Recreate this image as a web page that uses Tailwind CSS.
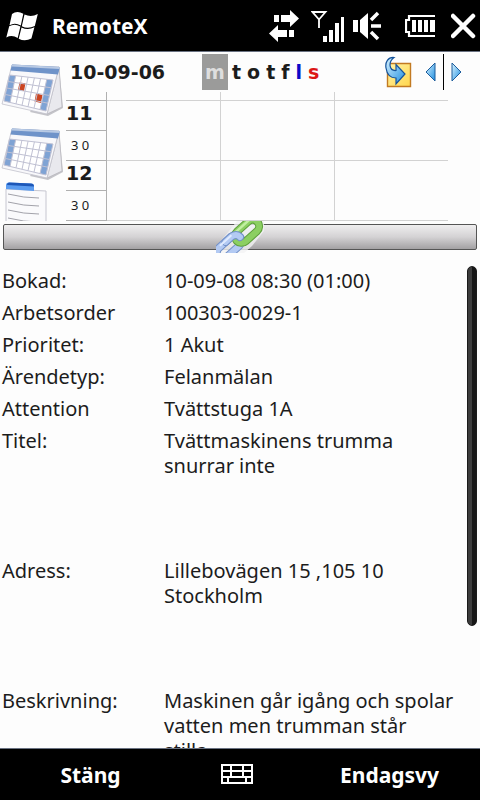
<!DOCTYPE html>
<html lang="sv">
<head>
    <meta charset="UTF-8" />
    <meta name="viewport" content="width=device-width, initial-scale=1.0"/>
    <title>RemoteX</title>
    <script src="https://cdn.jsdelivr.net/npm/@tailwindcss/browser@4"></script>
    <style>
        body { font-family: 'Noto Sans', 'Open Sans', sans-serif; }
        .wide { font-family: 'DejaVu Sans', sans-serif; }
    </style>
</head>
<body class="bg-[#fdfdfd] text-[#1c1c1c] h-screen flex flex-col overflow-hidden">

<!-- Status bar -->
<header class="h-[52px] shrink-0 bg-black text-white border-b border-gray-500 flex items-center pl-1.5 pr-1">
    <button aria-label="Start">
        <svg class="w-8 h-8" viewBox="6 10 32 32" fill="#fff">
            <path d="M12 14Q17 10 23.300 13.700L20.800 25.500Q15 22 9.500 25.200Z"/>
            <path d="M24.500 14.500Q31 17.500 37.800 14L34.800 26Q28 29.500 21.800 26.300Z"/>
            <path d="M9.200 26.300Q14.500 23.200 20.400 26.500L17.700 38Q12 34.500 6.300 37.500Z"/>
            <path d="M21.500 27.400Q28 30.600 34.400 27.200L31.400 38.500Q25 42 18.700 38.800Z"/>
        </svg>
    </button>
    <h1 class="ml-3.5 text-[21px] leading-7 font-bold">RemoteX</h1>
    <div class="ml-auto flex items-center">
        <svg class="w-[30px] h-9" viewBox="269 8 30 36" fill="#fff">
            <path d="M274 15h5v7h-5zM281 15h9v-5l9 8.500-9 8.500v-5h-9zM289 30h5v7h-5zM287 30h-9v-5l-9 8.500 9 8.500v-5h9z"/>
        </svg>
        <svg class="ml-3 w-[34px] h-9" viewBox="311 8 34 36" fill="#fff">
            <path d="M312.500 12h13L319 19.500ZM319 19v9" fill="none" stroke="#fff" stroke-width="1.800"/>
            <path d="M323 36h4v6h-4zM329 30h4v12h-4zM335 23h4v19h-4zM341 17h3v25h-3z"/>
        </svg>
        <svg class="ml-2 w-7 h-9" viewBox="352 8 28 36" fill="#fff">
            <path d="M352 20h5v12h-5zM359 20l8-7v26l-8-7z"/>
            <path d="M370 26h10M370 20l7-7M370 32l7 7" fill="none" stroke="#fff" stroke-width="3.500"/>
        </svg>
        <svg class="ml-6 w-[31px] h-9" viewBox="405 8 31 36" fill="#fff">
            <path d="M435 16H409V20H406V32H409V36H435" fill="none" stroke="#fff" stroke-width="2.200"/>
            <path d="M412 20h4v12h-4zM418 20h4v12h-4zM424 20h4v12h-4zM430 20h5v12h-5z"/>
        </svg>
        <button class="ml-[15px]" aria-label="Stäng fönster">
            <svg class="w-[25px] h-9" viewBox="451 8 25 36">
                <path d="M453 16l20 20M473 16L453 36" stroke="#fff" stroke-width="4.500" stroke-linecap="round"/>
            </svg>
        </button>
    </div>
</header>

<!-- Calendar -->
<section class="h-[169px] shrink-0 flex">
    <nav class="w-[66px] shrink-0 h-full overflow-hidden flex flex-col pt-2.5">
        <button class="h-16 shrink-0" aria-label="Månad">
            <svg class="w-[66px] h-16" viewBox="0 0 66 64">
                <path d="M59 4L63 46L48 54L30 50Z" fill="#c4c4c9"/>
                <path d="M59 5L62 45L47 52Z" fill="#e9e9ee" stroke="#b0afb6" stroke-width=".6"/>
                <path d="M12 3L59 5L47 52L2 42Z" fill="#f8f8fb" stroke="#c2c2cc" stroke-width=".8"/>
                <path d="M12 2.500L60 5L58 12.500L10.500 8.500Z" fill="#6f93c9"/>
                <path d="M12 2.500L60 5L59.500 7L11.500 4.500Z" fill="#b9cae4"/>
                <path d="M9.500 13L53 18L46 49L4 39Z" fill="#fff"/>
                <path d="M9.500 13L15.700 13.700L10 40.400L4 39Z M46.800 17.300L53 18L46 49L40 47.600Z" fill="#7fa3d4"/>
                <path d="M19.500 20.500L25.500 21.300L24 29L18 28Z M36 31.500L42.500 33L41 41L34.500 39.500Z" fill="#cb4420"/>
                <path d="M9.500 13L53 18L46 49L4 39ZM8 19.500L51.300 25.800M6.800 26L49.500 33.500M5.400 32.500L47.800 41.200M15.700 13.700L10 40.400M21.900 14.400L16 41.900M28.100 15.100L22 43.300M34.400 15.900L28 44.700M40.600 16.600L34 46.100M46.800 17.300L40 47.600" fill="none" stroke="#c0c1d3"/>
            </svg>
        </button>
        <button class="h-14 shrink-0" aria-label="Vecka">
            <svg class="w-[66px] h-14" viewBox="0 0 66 56">
                <path d="M59 4L63 46L48 54L30 50Z" fill="#c4c4c9"/>
                <path d="M59 5L62 45L47 52Z" fill="#e9e9ee" stroke="#b0afb6" stroke-width=".6"/>
                <path d="M12 3L59 5L47 52L2 42Z" fill="#f8f8fb" stroke="#c2c2cc" stroke-width=".8"/>
                <path d="M12 2.500L60 5L58 12.500L10.500 8.500Z" fill="#6f93c9"/>
                <path d="M12 2.500L60 5L59.500 7L11.500 4.500Z" fill="#b9cae4"/>
                <path d="M9.500 13L53 18L46 49L4 39Z" fill="#fff"/>
                <path d="M9.500 13L15.700 13.700L10 40.400L4 39Z M46.800 17.300L53 18L46 49L40 47.600Z" fill="#7fa3d4"/>
                <path d="M9.500 13L53 18L46 49L4 39ZM8 19.500L51.300 25.800M6.800 26L49.500 33.500M5.400 32.500L47.800 41.200M15.700 13.700L10 40.400M21.900 14.400L16 41.900M28.100 15.100L22 43.300M34.400 15.900L28 44.700M40.600 16.600L34 46.100M46.800 17.300L40 47.600" fill="none" stroke="#c0c1d3"/>
            </svg>
        </button>
        <button class="h-12 shrink-0" aria-label="Lista">
            <svg class="w-[66px] h-12" viewBox="0 0 66 48">
                <path d="M6 7L46 9V48H6Z" fill="#fafafc" stroke="#c6c6d0"/>
                <path d="M6 3Q6 .5 9 .5L31 1.500Q34 1.500 34 4.500V9L6 7Z" fill="#5b9cf0"/>
                <path d="M7 3Q7 .5 9 .5L31 1.500Q34 1.500 34 4.500Z" fill="#1d57b8"/>
                <path d="M8 12Q24 16 39 16M8 20Q24 24 39 24M8 28Q24 32 39 32M8 36Q24 40 39 40" stroke="#a2a2aa" fill="none"/>
            </svg>
        </button>
    </nav>

    <div class="flex-1 mr-8">
        <div class="wide h-10 flex items-center">
            <h2 class="ml-1 w-[132px] text-[19px] leading-6 font-bold">10-09-06</h2>
            <div class="flex items-center gap-1.5 text-[19px] leading-6 font-bold">
                <button class="w-[26px] h-9 -mr-0.5 bg-[#9b9b9a] text-[#dedede]">m</button>
                <button>t</button>
                <button>o</button>
                <button>t</button>
                <button>f</button>
                <button class="text-[#0a0ac8]">l</button>
                <button class="text-[#dc1616]">s</button>
            </div>
            <div class="ml-auto -mr-4 flex items-center">
                <button aria-label="Gå till idag">
                    <svg class="w-7 h-8" viewBox="386 56 28 32">
                        <defs>
                            <linearGradient id="note" x1="0" y1="0" x2="1" y2="1">
                                <stop offset="0" stop-color="#fff3a8"/><stop offset="1" stop-color="#ffd64c"/>
                            </linearGradient>
                            <linearGradient id="arrow" x1="0" y1="0" x2="1" y2="1">
                                <stop offset="0" stop-color="#d9f3ff"/><stop offset="1" stop-color="#1e8ee0"/>
                            </linearGradient>
                        </defs>
                        <path d="M388.500 63.500H411.500V86.500H388.500Z" fill="url(#note)" stroke="#c27a22" stroke-width="1.400"/>
                        <path d="M395 57.500C389 57 386 62 387 68C388 75 392 78 397 78V84L406 74L397 64.500V70.500C390 71 389 62 395 57.500Z" fill="url(#arrow)" stroke="#14529a" stroke-width="1.200"/>
                    </svg>
                </button>
                <button class="ml-3" aria-label="Föregående vecka">
                    <svg class="w-[11px] h-5" viewBox="0 0 11 20">
                        <path d="M10 1V19L1 10Z" fill="url(#arrow)" stroke="#1c5c9c"/>
                    </svg>
                </button>
                <span class="mx-[7px] w-px h-9 bg-black"></span>
                <button class="mr-0.5" aria-label="Nästa vecka">
                    <svg class="w-[11px] h-5" viewBox="0 0 11 20">
                        <path d="M1 1V19L10 10Z" fill="url(#arrow)" stroke="#1c5c9c"/>
                    </svg>
                </button>
            </div>
        </div>
        <table class="w-full table-fixed border-collapse">
            <colgroup>
                <col class="w-10" />
                <col />
                <col />
                <col />
            </colgroup>
            <tbody>
                <tr class="h-2 border-b border-[#d2d2d2]">
                    <td class="p-0 border-r border-b border-[#b0b0b0]"></td>
                    <td class="p-0 border-r border-[#d2d2d2]"></td>
                    <td class="p-0 border-r border-[#d2d2d2]"></td>
                    <td class="p-0"></td>
                </tr>
                <tr class="h-[30px]">
                    <th class="wide p-0 pb-1 text-left text-[19px] leading-6 border-r border-b border-[#b0b0b0]">11</th>
                    <td class="border-r border-[#d2d2d2]"></td>
                    <td class="border-r border-[#d2d2d2]"></td>
                    <td></td>
                </tr>
                <tr class="h-[30px] border-b border-[#d2d2d2]">
                    <th class="p-0 pl-[5px] text-left text-[13px] leading-6 font-normal border-r border-b border-[#b0b0b0]">3 0</th>
                    <td class="border-r border-[#d2d2d2]"></td>
                    <td class="border-r border-[#d2d2d2]"></td>
                    <td></td>
                </tr>
                <tr class="h-[30px]">
                    <th class="wide p-0 pb-1 text-left text-[19px] leading-6 border-r border-b border-[#b0b0b0]">12</th>
                    <td class="border-r border-[#d2d2d2]"></td>
                    <td class="border-r border-[#d2d2d2]"></td>
                    <td></td>
                </tr>
                <tr class="h-[30px] border-b border-[#d2d2d2]">
                    <th class="p-0 pl-[5px] text-left text-[13px] leading-6 font-normal border-r border-b border-[#b0b0b0]">3 0</th>
                    <td class="border-r border-[#d2d2d2]"></td>
                    <td class="border-r border-[#d2d2d2]"></td>
                    <td></td>
                </tr>
            </tbody>
        </table>
    </div>
</section>

<!-- Splitter with link icon -->
<button class="relative mx-[3px] mt-[3px] h-[26px] shrink-0 rounded-xs border border-[#555] bg-linear-to-b from-[#efeeef] via-[#d4d2d4] to-[#a3a1a3]" aria-label="Koppling">
    <svg class="absolute left-1/2 -translate-x-1/2 -top-1 w-12 h-8" viewBox="216 221 48 32" fill="none">
        <path d="M216 253V247L229 231L237 221H264V231L252 246L244 253Z" fill="#f2f2f4" opacity=".8"/>
        <g stroke-linecap="round" transform="rotate(-42 240 237)">
            <rect x="211" y="231" width="29" height="12" rx="6" stroke="#7391c9" stroke-width="8"/>
            <rect x="211" y="231" width="29" height="12" rx="6" stroke="#b3caf3" stroke-width="6"/>
            <rect x="235" y="231" width="28" height="13" rx="6.500" stroke="#5f9f3c" stroke-width="8"/>
            <rect x="235" y="231" width="28" height="13" rx="6.500" stroke="#8ccf62" stroke-width="6"/>
            <path d="M240 230.500H258" stroke="#c2efa2" stroke-width="2.500"/>
            <path d="M226 231H234Q240 232 240 237" stroke="#7391c9" stroke-width="8"/>
            <path d="M226 231H234Q240 232 240 237" stroke="#b3caf3" stroke-width="6"/>
            <path d="M220 230H234" stroke="#e0ebff" stroke-width="2"/>
        </g>
    </svg>
</button>

<!-- Order details -->
<main class="flex-1 min-h-0 flex pt-4 pr-[3px] overflow-hidden">
    <dl class="flex-1 grid grid-cols-[162px_1fr] content-start gap-y-[7px] pl-0.5 pt-0.5 text-[20px] leading-[25px]">
        <dt>Bokad:</dt>
        <dd>10-09-08 08:30 (01:00)</dd>
        <dt>Arbetsorder</dt>
        <dd>100303-0029-1</dd>
        <dt>Prioritet:</dt>
        <dd>1 Akut</dd>
        <dt>Ärendetyp:</dt>
        <dd>Felanmälan</dd>
        <dt>Attention</dt>
        <dd>Tvättstuga 1A</dd>
        <dt>Titel:</dt>
        <dd class="min-h-[123px]">Tvättmaskinens trumma<br>snurrar inte</dd>
        <dt>Adress:</dt>
        <dd class="min-h-[123px]">Lillebovägen 15 ,105 10<br>Stockholm</dd>
        <dt>Beskrivning:</dt>
        <dd class="min-h-[123px]">Maskinen går igång och spolar<br>vatten men trumman står<br>stilla</dd>
    </dl>
    <div class="w-2.5 h-[360px] shrink-0 rounded-full border border-[#1a1a1a] bg-linear-to-r from-[#3c3c3c] from-50% to-[#161616] to-50%"></div>
</main>

<!-- Soft keys -->
<footer class="h-[52px] shrink-0 bg-black text-white border-t border-gray-500 grid grid-cols-[1fr_118px_1fr] items-center text-[21px] leading-7 font-bold">
    <button>Stäng</button>
    <button class="flex justify-center" aria-label="Tangentbord">
        <svg class="w-8 h-7 mr-1.5" viewBox="0 0 32 28" fill="none" stroke="#fff" stroke-width="2">
            <path d="M1 4H31V22H1ZM1 10H31M1 16H31M10 4V16M22 4V16M7 16V22M25 16V22"/>
        </svg>
    </button>
    <button>Endagsvy</button>
</footer>

</body>
</html>
